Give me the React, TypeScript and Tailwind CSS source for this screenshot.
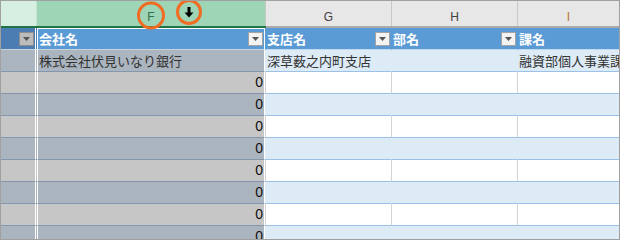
import React from "react";

const CJK = '"Noto Sans CJK JP", "Noto Sans", sans-serif';
const LAT = '"Liberation Sans", Arial, sans-serif';

function Dropdown({ variant }: { variant: "light" | "gray" }) {
  return (
    <div
      className={
        variant === "light"
          ? "ml-auto mr-[1px] flex h-[14px] w-[15px] items-center justify-center border border-[#a3a3a3] bg-[#f3f3f3]"
          : "ml-auto mr-[1px] flex h-[14px] w-[15px] items-center justify-center border border-[#8c8c8c] bg-[#bcbcbc]"
      }
    >
      <svg width="7" height="4" viewBox="0 0 7 4">
        <path d="M0 0h7L3.5 4z" fill="#555555" />
      </svg>
    </div>
  );
}

export default function App() {
  const rows = Array.from({ length: 9 }, (_, i) => i);
  return (
    <div className="relative h-[240px] w-[620px] overflow-hidden border border-[#a0a0a0] bg-white">
      {/* column letters */}
      <div className="flex h-[25px] text-[12px] leading-[14px]" style={{ fontFamily: LAT }}>
        <div className="w-[36px] border-r border-r-[#c3e4d0] bg-[#d6efe1]" />
        <div className="flex w-[228px] justify-center bg-[#9fd5b7] pt-[9px] text-[#2f6e46]">F</div>
        <div className="flex w-[126px] justify-center border-l border-l-[#c8c8c8] bg-[#e7e7e7] pt-[9px] text-[#404040]">G</div>
        <div className="flex w-[126px] justify-center border-l border-l-[#c8c8c8] bg-[#e7e7e7] pt-[9px] text-[#404040]">H</div>
        <div className="flex flex-1 justify-center border-l border-l-[#c8c8c8] bg-[#e7e7e7] pt-[9px] text-[#b87638]">I</div>
      </div>
      <div className="flex h-[2px]">
        <div className="w-[265px] bg-[#217346]" />
        <div className="flex-1 bg-[#ababab]" />
      </div>

      {/* table header */}
      <div className="flex h-[22px] text-[13px] font-bold text-white" style={{ fontFamily: CJK }}>
        <div className="flex w-[35px] items-center border-b border-r border-b-[#c9d3de] border-r-white bg-[#4b7db2]">
          <Dropdown variant="gray" />
        </div>
        <div className="w-[1px] border-b border-b-[#c9d3de] bg-[#4b7db2]" />
        <div className="flex w-[228px] items-center border-b border-l border-r border-t border-b-[#c9d3de] border-l-white border-r-white border-t-white bg-[#5b9bd5] pl-[1px]">
          <span>会社名</span>
          <Dropdown variant="light" />
        </div>
        <div className="flex w-[126px] items-center border-b border-l border-b-[#c5d9ee] border-l-[#5b9bd5] bg-[#5b9bd5] pl-[1px]">
          <span>支店名</span>
          <Dropdown variant="light" />
        </div>
        <div className="flex w-[126px] items-center border-b border-l border-b-[#c5d9ee] border-l-[#5b9bd5] bg-[#5b9bd5] pl-[1px]">
          <span>部名</span>
          <Dropdown variant="light" />
        </div>
        <div className="flex flex-1 items-center overflow-hidden whitespace-nowrap border-b border-l border-b-[#c5d9ee] border-l-[#5b9bd5] bg-[#5b9bd5] pl-[1px]">
          <span>課名</span>
        </div>
      </div>

      {/* data rows */}
      {rows.map((i) => {
        const band = i % 2 === 0;
        const sel = band ? "bg-[#abb5bf]" : "bg-[#c6c6c6]";
        return (
          <div key={i} className="flex h-[22px] text-[13px] text-[#333333]" style={{ fontFamily: CJK }}>
            <div className={`w-[35px] border-b border-r border-b-[#8497ac] border-r-white ${sel}`} />
            <div className={`w-[1px] border-b border-b-[#8497ac] ${sel}`} />
            <div
              className={`flex w-[228px] items-center border-b border-l border-r border-b-[#8497ac] border-l-white border-r-white ${sel} ${
                i === 0 ? "justify-start pl-[1px]" : "justify-end pr-[1px]"
              }`}
            >
              {i === 0 ? (
                <span className="whitespace-nowrap">株式会社伏見いなり銀行</span>
              ) : (
                <span className="text-[14px] text-[#111111]" style={{ fontFamily: LAT }}>
                  0
                </span>
              )}
            </div>
            <div
              className={
                band
                  ? "flex w-[126px] items-center whitespace-nowrap border-b border-l border-b-[#9bc2e6] border-l-[#ddebf7] bg-[#ddebf7] pl-[1px]"
                  : "flex w-[126px] items-center border-b border-l border-b-[#9bc2e6] border-l-[#d4d4d4] bg-white"
              }
            >
              {i === 0 && <span>深草薮之内町支店</span>}
            </div>
            <div
              className={
                band
                  ? "w-[126px] border-b border-l border-b-[#9bc2e6] border-l-[#ddebf7] bg-[#ddebf7]"
                  : "w-[126px] border-b border-l border-b-[#9bc2e6] border-l-[#d4d4d4] bg-white"
              }
            />
            <div
              className={
                band
                  ? "flex flex-1 items-center overflow-hidden whitespace-nowrap border-b border-l border-b-[#9bc2e6] border-l-[#ddebf7] bg-[#ddebf7] pl-[1px]"
                  : "flex-1 border-b border-l border-b-[#9bc2e6] border-l-[#d4d4d4] bg-white"
              }
            >
              {i === 0 && <span>融資部個人事業課</span>}
            </div>
          </div>
        );
      })}

      {/* annotation circles */}
      <svg className="pointer-events-none absolute left-[-1px] top-[-1px]" width="620" height="32" viewBox="0 0 620 32">
        <circle cx="151" cy="15.5" r="12.5" fill="none" stroke="#ef6c22" strokeWidth="3" />
        <circle cx="189" cy="12" r="11.5" fill="none" stroke="#ef6c22" strokeWidth="3" />
        <rect x="187.5" y="7" width="3" height="6" fill="#000" />
        <path d="M184.5 12.5h9L189 17.5z" fill="#000" />
      </svg>
    </div>
  );
}
